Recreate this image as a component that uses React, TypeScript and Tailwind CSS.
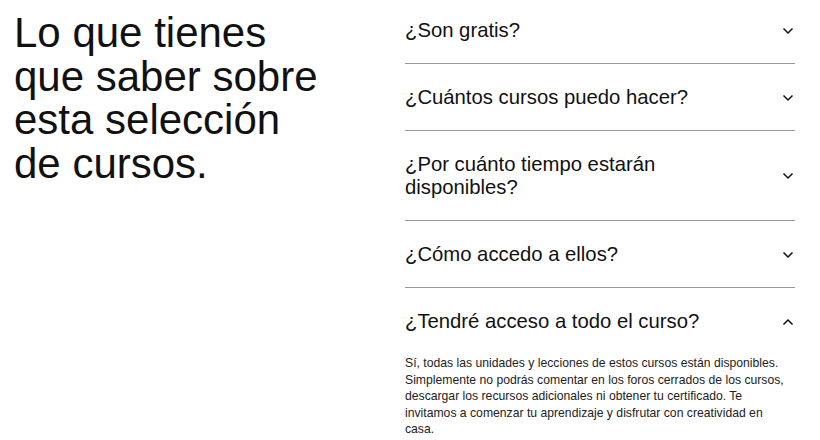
import { useState } from 'react';

const preguntas = [
  { id: 1, titulo: '¿Son gratis?', respuesta: '' },
  { id: 2, titulo: '¿Cuántos cursos puedo hacer?', respuesta: '' },
  { id: 3, titulo: '¿Por cuánto tiempo estarán disponibles?', respuesta: '' },
  { id: 4, titulo: '¿Cómo accedo a ellos?', respuesta: '' },
  {
    id: 5,
    titulo: '¿Tendré acceso a todo el curso?',
    respuesta:
      'Sí, todas las unidades y lecciones de estos cursos están disponibles. Simplemente no podrás comentar en los foros cerrados de los cursos, descargar los recursos adicionales ni obtener tu certificado. Te invitamos a comenzar tu aprendizaje y disfrutar con creatividad en casa.',
  },
];

function Chevron({ open }: { open: boolean }) {
  return (
    <svg width="12" height="8" viewBox="0 0 12 8" className={open ? 'rotate-180' : ''}>
      <polyline points="1.5,1.5 6,6 10.5,1.5" fill="none" stroke="#111" strokeWidth="1.5" />
    </svg>
  );
}

export default function App() {
  const [abierta, setAbierta] = useState<number | null>(5);

  return (
    <div className="flex w-[820px] h-[440px] overflow-hidden bg-white text-[#111]" style={{ fontFamily: '"Liberation Sans", Arial, sans-serif' }}>
      <div className="w-[405px] shrink-0 pl-[14px] pt-[11px]">
        <h2 className="w-[312px] text-[42px] leading-[43.5px] font-normal">
          Lo que tienes que saber sobre esta selección de cursos.
        </h2>
      </div>

      <div className="w-[390px] shrink-0">
        {preguntas.map((p, i) => {
          const open = abierta === p.id;
          const last = i === preguntas.length - 1;
          return (
            <div key={p.id} className={last ? '' : 'border-b border-[#9a9a9a]'}>
              <button
                onClick={() => setAbierta(open ? null : p.id)}
                className={`flex w-full items-center text-left ${i === 0 ? 'pt-[19px]' : 'pt-[22px]'} ${open ? 'pb-[22px]' : 'pb-[21px]'}`}
              >
                <span className="flex-1 pr-[40px] text-[20.3px] leading-[23px]">{p.titulo}</span>
                <span className="shrink-0 mr-[1px] flex items-center">
                  <Chevron open={open} />
                </span>
              </button>
              {open && p.respuesta && (
                <p className="w-[380px] text-[12.2px] leading-[16.5px] text-[#222]">{p.respuesta}</p>
              )}
            </div>
          );
        })}
      </div>
    </div>
  );
}
